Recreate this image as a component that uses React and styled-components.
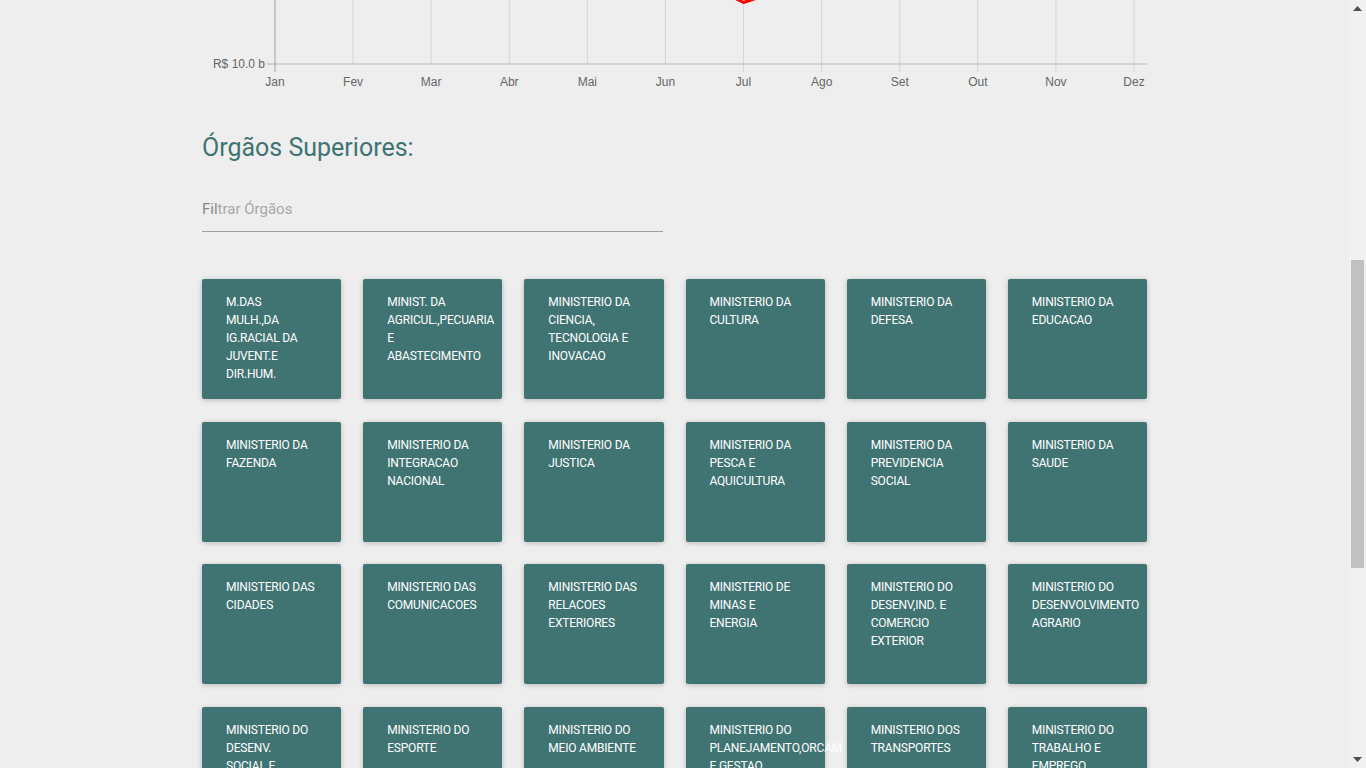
import React, { useLayoutEffect } from "react";
import styled, { createGlobalStyle } from "styled-components";

const GlobalStyle = createGlobalStyle`
  html, body {
    margin: 0;
    padding: 0;
    background: #eeeeee;
  }
  body {
    font-family: Roboto, "Noto Sans", Arial, sans-serif;
  }
`;

const months = ["Jan", "Fev", "Mar", "Abr", "Mai", "Jun", "Jul", "Ago", "Set", "Out", "Nov", "Dez"];
const spending = [180, 140, 210, 160, 120, 362, 400.5, 374, 250, 230, 200, 150];

const orgaos = [
  "M.DAS\nMULH.,DA IG.RACIAL DA JUVENT.E DIR.HUM.",
  "MINIST. DA AGRICUL.,PECUARIA E ABASTECIMENTO",
  "MINISTERIO DA CIENCIA, TECNOLOGIA E INOVACAO",
  "MINISTERIO DA CULTURA",
  "MINISTERIO DA DEFESA",
  "MINISTERIO DA EDUCACAO",
  "MINISTERIO DA FAZENDA",
  "MINISTERIO DA INTEGRACAO NACIONAL",
  "MINISTERIO DA JUSTICA",
  "MINISTERIO DA PESCA E AQUICULTURA",
  "MINISTERIO DA PREVIDENCIA SOCIAL",
  "MINISTERIO DA SAUDE",
  "MINISTERIO DAS CIDADES",
  "MINISTERIO DAS COMUNICACOES",
  "MINISTERIO DAS RELACOES EXTERIORES",
  "MINISTERIO DE MINAS E ENERGIA",
  "MINISTERIO DO DESENV,IND. E COMERCIO EXTERIOR",
  "MINISTERIO DO DESENVOLVIMENTO AGRARIO",
  "MINISTERIO DO DESENV.\nSOCIAL E COMBATE A FOME",
  "MINISTERIO DO ESPORTE",
  "MINISTERIO DO MEIO AMBIENTE",
  "MINISTERIO DO PLANEJAMENTO,ORCAM E GESTAO",
  "MINISTERIO DOS TRANSPORTES",
  "MINISTERIO DO TRABALHO E EMPREGO",
  "MINISTERIO DO TURISMO",
  "PRESIDENCIA DA REPUBLICA",
  "SECRETARIA DE AVIACAO CIVIL",
  "SECRETARIA DE PORTOS",
  "CONTROLADORIA-GERAL DA UNIAO",
  "ADVOCACIA-GERAL DA UNIAO",
  "CAMARA DOS DEPUTADOS",
  "SENADO FEDERAL",
  "TRIBUNAL DE CONTAS DA UNIAO",
  "JUSTICA FEDERAL",
  "JUSTICA DO TRABALHO",
  "MINISTERIO PUBLICO DA UNIAO",
];

const X0 = 73;
const STEP = 859 / 11;
const BASE = 462;

const Chart = () => {
  const pts = spending.map((y, i) => `${X0 + i * STEP},${y}`).join(" ");
  return (
    <ChartSvg viewBox="0 0 945 490" width="945" height="490">
      {months.map((m, i) => {
        const x = X0 + i * STEP;
        return (
          <g key={m}>
            {i > 0 && (
              <line x1={x} x2={x} y1={40} y2={i > 5 ? BASE + 8 : BASE} stroke="#d4d4d4" strokeWidth="1" />
            )}
            <text x={x} y={BASE + 22} textAnchor="middle">
              {m}
            </text>
          </g>
        );
      })}
      {[0, 1, 2, 3, 4].map((k) => (
        <g key={k}>
          <line x1={X0 - 8} x2={X0} y1={BASE - k * 100} y2={BASE - k * 100} stroke="#b0b0b0" />
          <text x={X0 - 10} y={BASE - k * 100 + 4} textAnchor="end">
            R$ {(10 + k * 10).toFixed(1)} b
          </text>
        </g>
      ))}
      <line x1={X0} x2={945} y1={BASE} y2={BASE} stroke="#b8b8b8" strokeWidth="1" />
      <line x1={X0} x2={X0} y1={40} y2={BASE + 8} stroke="#a0a0a0" strokeWidth="1" />
      <polyline points={pts} fill="none" stroke="#ff0000" strokeWidth="3" strokeLinejoin="round" />
    </ChartSvg>
  );
};

const OrgaoCard = ({ nome }) => (
  <Card>
    <CardText>{nome}</CardText>
  </Card>
);

const Arrow = ({ down }) => (
  <ArrowBtn>
    <svg width="9" height="5" viewBox="0 0 9 5">
      <polygon points={down ? "0,0 9,0 4.5,5" : "0,5 9,5 4.5,0"} fill="#505050" />
    </svg>
  </ArrowBtn>
);

const App = () => {
  useLayoutEffect(() => {
    window.scrollTo(0, 598);
  }, []);

  return (
    <Page>
      <GlobalStyle />
      <Container>
        <Intro>
          <SectionTitle $top={0}>Gastos Mensais:</SectionTitle>
        </Intro>
        <Chart />
        <SectionTitle $top={40}>Órgãos Superiores:</SectionTitle>
        <Field>
          <Hint>
            <strong>Fil</strong>trar Órgãos
          </Hint>
          <FilterInput type="text" aria-label="Filtrar Órgãos" />
        </Field>
        <CardGrid>
          {orgaos.map((o) => (
            <OrgaoCard key={o} nome={o} />
          ))}
        </CardGrid>
      </Container>
      <ScrollBar aria-hidden="true">
        <Arrow />
        <Track>
          <Thumb />
        </Track>
        <Arrow down />
      </ScrollBar>
    </Page>
  );
};

const Page = styled.main`
  padding: 0 17px 97px 0;
`;

const Container = styled.div`
  width: 945px;
  margin: 0 auto;
`;

const Intro = styled.header`
  padding-top: 120px;
  height: 80px;
`;

const SectionTitle = styled.h2`
  margin: ${({ $top }) => $top}px 0 0;
  font-family: Roboto, "Noto Sans", sans-serif;
  font-size: 25px;
  line-height: 32px;
  font-weight: 400;
  color: #3f7473;
`;

const ChartSvg = styled.svg`
  display: block;
  overflow: visible;
  text {
    font-family: "Liberation Sans", Arial, sans-serif;
    font-size: 12px;
    fill: #666666;
  }
`;

const Field = styled.div`
  position: relative;
  width: 461px;
  height: 45px;
  margin-top: 23px;
  box-sizing: border-box;
  border-bottom: 1px solid #a0a0a0;
`;

const Hint = styled.span`
  position: absolute;
  left: 0;
  top: 0;
  line-height: 44px;
  font-size: 15px;
  color: #a8a8a8;
  pointer-events: none;
  strong {
    font-weight: 400;
    color: #888888;
  }
`;

const FilterInput = styled.input`
  width: 100%;
  height: 44px;
  padding: 0;
  border: 0;
  outline: none;
  background: transparent;
  font-family: Roboto, sans-serif;
  font-size: 15px;
`;

const CardGrid = styled.div`
  display: grid;
  grid-template-columns: repeat(6, minmax(0, 1fr));
  column-gap: 22px;
  row-gap: 22.67px;
  margin-top: 47px;
`;

const Card = styled.div`
  min-width: 0;
  height: 120px;
  box-sizing: border-box;
  padding: 14px 24px;
  background: #3f7473;
  border-radius: 2px;
  box-shadow: 0 1px 6px rgba(0, 0, 0, 0.12), 0 1px 4px rgba(0, 0, 0, 0.12);
`;

const CardText = styled.div`
  font-family: Roboto, sans-serif;
  font-size: 12px;
  line-height: 18px;
  letter-spacing: -0.2px;
  white-space: pre-line;
  color: #ffffff;
`;

const ScrollBar = styled.div`
  position: fixed;
  top: 0;
  right: 0;
  bottom: 0;
  width: 17px;
  display: flex;
  flex-direction: column;
  background: #f1f1f1;
`;

const ArrowBtn = styled.div`
  height: 17px;
  display: flex;
  align-items: center;
  justify-content: center;
`;

const Track = styled.div`
  flex: 1;
  padding: 243px 2px 0;
`;

const Thumb = styled.div`
  height: 308px;
  background: #c1c1c1;
`;

export default App;
